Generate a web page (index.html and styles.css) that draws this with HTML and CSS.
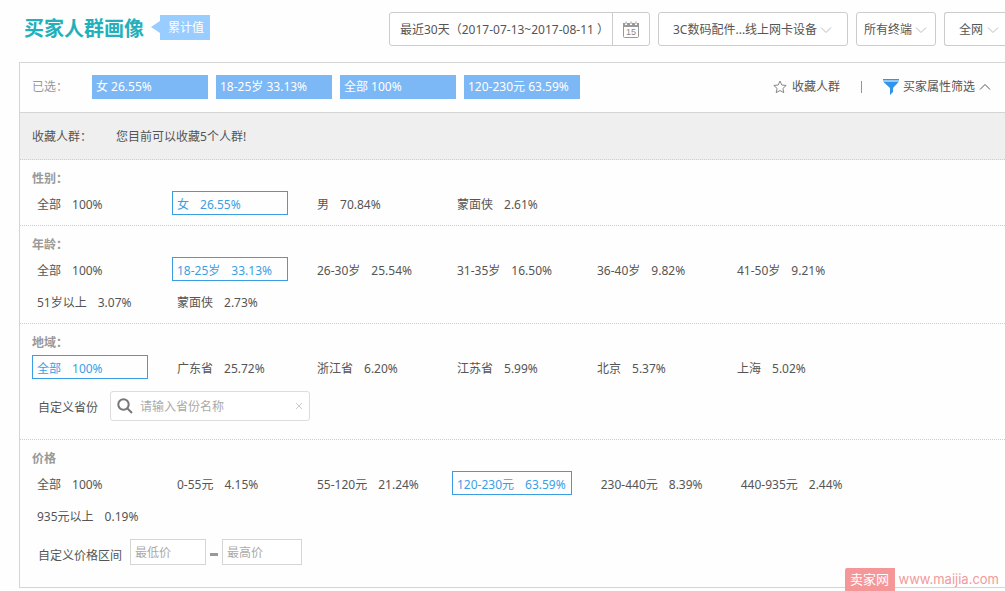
FILE: index.html
```
<!DOCTYPE html>
<html lang="zh-CN">
<head>
<meta charset="utf-8">
<title>买家人群画像</title>
<link rel="stylesheet" href="styles.css">
</head>
<body>
<header class="header">
  <h1 class="title">买家人群画像</h1>
  <span class="flag">累计值</span>
  <div class="toolbar">
    <div class="date">
      <input class="date-input" type="text" aria-label="日期范围" readonly value="最近30天（2017-07-13~2017-08-11 ）">
      <button class="date-button" type="button" aria-label="选择日期">
        <svg width="18" height="18" viewBox="0 0 18 18" fill="none">
          <path d="M1.500 3v12.500q0 1 1 1h13q1 0 1-1V3" stroke="#999"/>
          <path d="M1 2h2v2h2V2h3v2h2V2h3v2h2V2h2v4H1z" fill="#999"/>
          <path d="M4 0.500v2.500M9 0.500v2.500M14 0.500v2.500" stroke="#999"/>
          <text class="day" x="9" y="14" text-anchor="middle">15</text>
        </svg>
      </button>
    </div>
    <div class="select category">
      <select aria-label="类目"><option>3C数码配件...线上网卡设备</option></select>
      <svg class="arrow" width="12" height="8" viewBox="0 0 12 8"><path d="M1 1.500l5 5 5-5"/></svg>
    </div>
    <div class="select terminal">
      <select aria-label="终端"><option>所有终端</option></select>
      <svg class="arrow" width="12" height="8" viewBox="0 0 12 8"><path d="M1 1.500l5 5 5-5"/></svg>
    </div>
    <div class="select network">
      <select aria-label="范围"><option>全网</option></select>
      <svg class="arrow" width="12" height="8" viewBox="0 0 12 8"><path d="M1 1.500l5 5 5-5"/></svg>
    </div>
  </div>
</header>

<main class="panel">
  <div class="chosen">
    <span class="chosen-label">已选：</span>
    <ul class="tags">
      <li class="tag">女 26.55%</li>
      <li class="tag">18-25岁 33.13%</li>
      <li class="tag">全部 100%</li>
      <li class="tag">120-230元 63.59%</li>
    </ul>
    <div class="actions">
      <button class="action save" type="button">
        <svg width="14" height="14" viewBox="0 0 14 14"><path d="M7 1l1.800 4 4.400.5-3.300 2.900.9 4.300L7 10.500l-3.800 2.200.9-4.300L.8 5.500 5.200 5z" fill="none" stroke="#888"/></svg>
        收藏人群
      </button>
      <span class="bar"></span>
      <button class="action filter" type="button">
        <svg width="16" height="16" viewBox="0 0 16 16" fill="#2d95ee"><path d="M0 0h16v1.500H0zM0 2.500h16L10 9v4l-3 3V9z"/></svg>
        买家属性筛选
        <svg class="up" width="12" height="8" viewBox="0 0 12 8"><path d="M1 6.500l5-5 5 5" fill="none" stroke="#555"/></svg>
      </button>
    </div>
  </div>

  <div class="saved">
    <span>收藏人群：</span>
    <span>您目前可以收藏5个人群!</span>
  </div>

  <section class="group">
    <h2 class="group-title">性别：</h2>
    <div class="options">
      <button class="option" type="button"><span>全部</span><span>100%</span></button>
      <button class="option active" type="button"><span>女</span><span>26.55%</span></button>
      <button class="option" type="button"><span>男</span><span>70.84%</span></button>
      <button class="option" type="button"><span>蒙面侠</span><span>2.61%</span></button>
    </div>
  </section>

  <section class="group">
    <h2 class="group-title">年龄：</h2>
    <div class="options">
      <button class="option" type="button"><span>全部</span><span>100%</span></button>
      <button class="option active" type="button"><span>18-25岁</span><span>33.13%</span></button>
      <button class="option" type="button"><span>26-30岁</span><span>25.54%</span></button>
      <button class="option" type="button"><span>31-35岁</span><span>16.50%</span></button>
      <button class="option" type="button"><span>36-40岁</span><span>9.82%</span></button>
      <button class="option" type="button"><span>41-50岁</span><span>9.21%</span></button>
      <button class="option" type="button"><span>51岁以上</span><span>3.07%</span></button>
      <button class="option" type="button"><span>蒙面侠</span><span>2.73%</span></button>
    </div>
  </section>

  <section class="group region">
    <h2 class="group-title">地域：</h2>
    <div class="options">
      <button class="option active" type="button"><span>全部</span><span>100%</span></button>
      <button class="option" type="button"><span>广东省</span><span>25.72%</span></button>
      <button class="option" type="button"><span>浙江省</span><span>6.20%</span></button>
      <button class="option" type="button"><span>江苏省</span><span>5.99%</span></button>
      <button class="option" type="button"><span>北京</span><span>5.37%</span></button>
      <button class="option" type="button"><span>上海</span><span>5.02%</span></button>
    </div>
    <div class="custom custom-region">
      <label for="province">自定义省份</label>
      <div class="search">
        <svg width="16" height="16" viewBox="0 0 16 16" fill="none" stroke="#777" stroke-width="2"><circle cx="6.500" cy="6.500" r="5.200"/><path d="M10.500 10.500l4.500 4.500"/></svg>
        <input id="province" type="text" placeholder="请输入省份名称">
        <button class="clear" type="button" aria-label="清除"><svg width="8" height="8" viewBox="0 0 8 8"><path d="M1 1l6 6M7 1L1 7" stroke="#ccc"/></svg></button>
      </div>
    </div>
  </section>

  <section class="group price">
    <h2 class="group-title">价格</h2>
    <div class="options">
      <button class="option" type="button"><span>全部</span><span>100%</span></button>
      <button class="option" type="button"><span>0-55元</span><span>4.15%</span></button>
      <button class="option" type="button"><span>55-120元</span><span>21.24%</span></button>
      <button class="option active" type="button"><span>120-230元</span><span>63.59%</span></button>
      <button class="option" type="button"><span>230-440元</span><span>8.39%</span></button>
      <button class="option" type="button"><span>440-935元</span><span>2.44%</span></button>
      <button class="option" type="button"><span>935元以上</span><span>0.19%</span></button>
    </div>
    <div class="custom custom-price">
      <label for="low">自定义价格区间</label>
      <div class="range">
        <input id="low" class="low" type="text" placeholder="最低价">
        <span class="dash"></span>
        <input class="high" type="text" placeholder="最高价" aria-label="最高价">
      </div>
    </div>
  </section>

  <a class="site" href="#"><span class="site-name">卖家网</span><span>www.maijia.com</span></a>
</main>
</body>
</html>
```
FILE: styles.css
```
* {
  box-sizing: border-box;
}

body {
  margin: 0;
  padding: 12px 0 3px;
  background: #fefefe;
  color: #555;
  font: 12px/16px "Noto Sans", "Noto Sans CJK SC", sans-serif;
}

button,
input,
select {
  margin: 0;
  padding: 0;
  border: 0;
  background: none;
  color: inherit;
  font: inherit;
}

input::placeholder {
  color: #aaa;
  opacity: 1;
}

svg {
  display: block;
  flex: none;
}

.header {
  display: flex;
  height: 50px;
  padding-left: 24px;
  align-items: flex-start;
}

.title {
  margin: 0;
  flex: none;
  color: #23b0bb;
  font-size: 20px;
  line-height: 33px;
}

.flag {
  display: flex;
  flex: none;
  width: 59px;
  margin: 3px 0 0 7px;
  gap: 8px;
  background: linear-gradient(#9cf, #9cf) right / 50px 100% no-repeat;
  color: #fff;
  line-height: 25px;
}

.flag::before {
  content: "";
  align-self: flex-start;
  margin-top: 6px;
  border: solid transparent;
  border-width: 6px 9px 6px 0;
  border-right-color: #9cf;
}

.toolbar {
  display: flex;
  flex: 1;
  gap: 8px;
  padding-left: 179px;
}

.date,
.select {
  display: flex;
  flex: none;
  height: 34px;
  border: 1px solid #ccc;
  border-radius: 3px;
  background: #fff;
}

.date {
  width: 261px;
}

.date-input {
  flex: 1;
  min-width: 0;
  padding: 2px 0 0 10px;
}

.date-button {
  display: grid;
  width: 37px;
  padding-top: 2px;
  border-left: 1px solid #ccc;
  place-items: center;
}

.day {
  fill: #888;
  font: 9px "Liberation Sans", sans-serif;
}

.select {
  position: relative;
}

.select select {
  flex: 1;
  min-width: 0;
  padding: 2px 0 0 14px;
  appearance: none;
}

.arrow {
  position: absolute;
  top: 13px;
  right: 15px;
  fill: none;
  stroke: #bbb;
  pointer-events: none;
}

.category {
  width: 190px;
}

.terminal {
  width: 80px;
}

.terminal select {
  padding-left: 7px;
}

.terminal .arrow {
  right: 8px;
}

.network {
  flex: 1;
  border-right: 0;
  border-radius: 3px 0 0 3px;
}

.network .arrow {
  right: 6px;
}

.panel {
  position: relative;
  margin-left: 19px;
  border: solid #d5d5d5;
  border-width: 1px 0 1px 1px;
}

.chosen {
  display: flex;
  height: 50px;
  padding: 0 14px 1px 12px;
  align-items: center;
  border-bottom: 1px solid #d5d5d5;
}

.chosen-label {
  width: 60px;
  color: #999;
}

.tags {
  display: flex;
  margin: 0;
  padding: 0;
  gap: 8px;
  list-style: none;
}

.tag {
  width: 116px;
  padding-left: 4px;
  background: #7cb8f5;
  color: #fff;
  line-height: 24px;
}

.actions {
  display: flex;
  margin-left: auto;
  align-items: center;
}

.action {
  display: flex;
  align-items: center;
}

.save {
  gap: 5px;
}

.filter {
  gap: 4px;
}

.bar {
  width: 1px;
  height: 12px;
  margin: 0 21px;
  background: #5ba3dc;
}

.saved {
  display: flex;
  height: 47px;
  padding: 2px 0 0 12px;
  gap: 24px;
  align-items: center;
  border-bottom: 1px dotted #ccc;
  background: #efefef;
}

.group {
  padding: 11px 20px 10px 12px;
  border-bottom: 1px dotted #ccc;
}

.group-title {
  margin: 0 0 4px;
  color: #999;
  font-size: 12px;
  line-height: 16px;
}

.options {
  display: flex;
  flex-wrap: wrap;
  gap: 8px 24px;
}

.option {
  display: flex;
  min-width: 116px;
  height: 24px;
  padding: 3px 5px 0 4px;
  gap: 11px;
  align-items: center;
  border: 1px solid transparent;
}

.option.active {
  border-color: #3a9ee5;
  color: #3a9ee5;
}

.custom {
  display: flex;
  margin-top: 12px;
  padding-left: 6px;
}

.custom-region {
  gap: 12px;
  align-items: center;
}

.custom-region label {
  padding-top: 3px;
}

.custom-price {
  gap: 8px;
  align-items: flex-end;
}

.custom-price label {
  padding-bottom: 1px;
}

.region {
  padding-bottom: 18px;
}

.price {
  padding-bottom: 22px;
  border-bottom: 0;
}

.search {
  display: flex;
  width: 200px;
  height: 30px;
  padding: 0 6px;
  gap: 7px;
  align-items: center;
  border: 1px solid #ddd;
  border-radius: 3px;
  background: #fff;
}

.search input {
  flex: 1;
  min-width: 0;
  padding-top: 2px;
}

.range {
  display: flex;
  align-items: center;
}

.low,
.high {
  width: 76px;
  height: 26px;
  padding-left: 4px;
  border: 1px solid #d5d5d5;
  background: #fff;
}

.high {
  width: 80px;
}

.dash {
  width: 8px;
  height: 3px;
  margin: 4px 4px 0;
  background: #999;
}

.site {
  display: flex;
  position: absolute;
  right: 6px;
  bottom: -4px;
  gap: 4px;
  color: #f29a9b;
  font: 13px/23px Inter, "Noto Sans CJK SC", sans-serif;
  text-decoration: none;
}

.site-name {
  width: 50px;
  border-radius: 2px 0 0 0;
  background: #f59798;
  color: #fff;
  text-align: center;
}
```
